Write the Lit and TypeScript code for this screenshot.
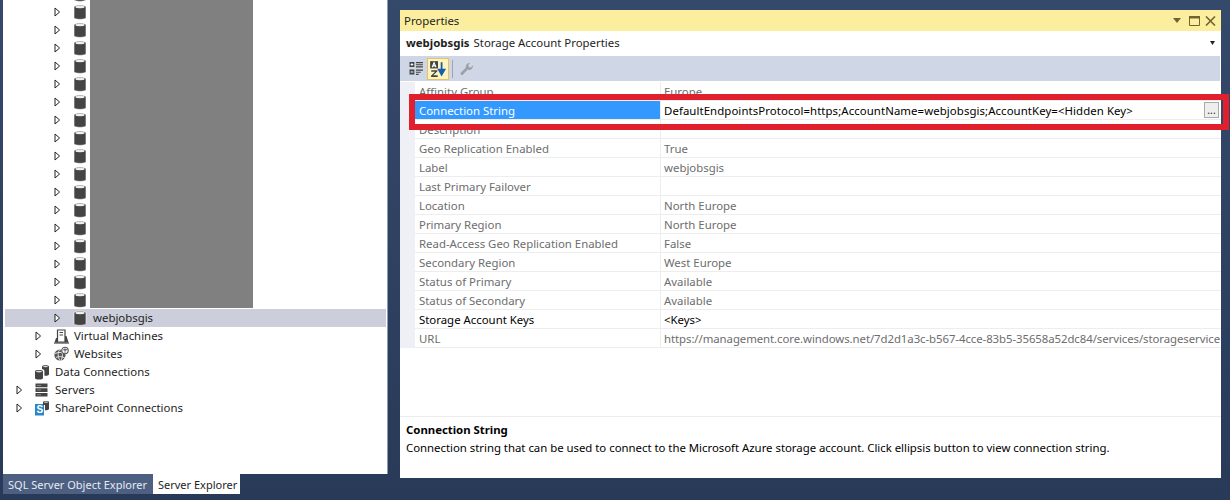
import {LitElement, css, html, svg} from "lit";
import {customElement} from "lit/decorators.js";
import {classMap} from "lit/directives/class-map.js";

const cylinder = svg`
    <path d="M2 4C2 1.6 14 1.6 14 4V14.5C14 17 2 17 2 14.5Z" fill="#444" stroke="#fff" stroke-width=".6"/>
    <ellipse cx="8" cy="4" rx="4.6" ry="1.2" fill="#eee"/>`;

const icons: Record<string, unknown> = {
    storage: cylinder,
    vm: svg`
        <path d="M4.5 3H12V15H4.5Z" fill="#fff" stroke="#444" stroke-width="1.2"/>
        <path d="M6.5 5.5H10M6.5 8H10" stroke="#444" stroke-width="1.2"/>
        <path d="M1.5 15.5L3 11H4.5V15.5ZM12 9H13.5L15.5 15.5H12Z" fill="#444"/>
        <path d="M1 16H16" stroke="#444" stroke-width="1.2"/>`,
    web: svg`
        <circle cx="7" cy="10" r="5.6" fill="#555"/>
        <path d="M2 8.5C5 7 9 7 12.5 9M3 12.5C6 11 9 11.5 12 13M7 4.5C4.5 7 4.5 12 7 15.5M7.5 4.5C10 7 10 12 8 15.5" fill="none" stroke="#eee" stroke-width=".9"/>
        <circle cx="12" cy="5.5" r="3.2" fill="#fff" stroke="#555" stroke-width="1.1"/>
        <path d="M10 4.6C11.5 5.4 13 5.4 14.4 4.6M12 2.6V8.2" stroke="#555" stroke-width=".7"/>`,
    data: svg`
        <path d="M1 8.5C1 6.6 9 6.6 9 8.5V15C9 17 1 17 1 15Z" fill="#444"/>
        <ellipse cx="5" cy="8.6" rx="3.2" ry=".8" fill="#ddd"/>
        <path d="M8 3.5C8 1.8 15 1.8 15 3.5V11.5C15 12.6 12 13 10.4 12.8V7.5C10 6.6 9 6.2 8 6Z" fill="#444"/>
        <ellipse cx="11.5" cy="3.6" rx="2.7" ry=".7" fill="#ddd"/>`,
    servers: svg`
        <path d="M1.5 2.5H13.5V6.2H1.5ZM1.5 7.2H13.5V10.9H1.5ZM1.5 11.9H13.5V15.6H1.5Z" fill="#444"/>
        <path d="M3 4.4H7M3 9H7M3 13.8H7" stroke="#aaa" stroke-width=".7"/>`,
    sharepoint: svg`
        <path d="M1 5H10V16.5H1Z" fill="#2a86c4"/>
        <text x="2.6" y="14.4" class="sp">S</text>
        <path d="M9 3C9 1.6 15 1.6 15 3V10C15 11 12.5 11.4 11 11.2V6H9Z" fill="#444"/>
        <ellipse cx="12" cy="3.1" rx="2.4" ry=".6" fill="#ddd"/>`,
};

const arrowIcon = html`<svg class="arrow" width="7" height="10" viewBox="0 0 7 10"><path d="M1 1L5.6 5L1 9Z" fill="#fff" stroke="#222" stroke-width="1"/></svg>`;

interface TreeRow {
    level: number;
    icon: string;
    text?: string;
    arrow?: boolean;
    selected?: boolean;
}

const treeRows: TreeRow[] = [
    ...Array.from({length: 18}, () => ({level: 2, icon: "storage", arrow: true})),
    {level: 2, icon: "storage", text: "webjobsgis", arrow: true, selected: true},
    {level: 1, icon: "vm", text: "Virtual Machines", arrow: true},
    {level: 1, icon: "web", text: "Websites", arrow: true},
    {level: 0, icon: "data", text: "Data Connections"},
    {level: 0, icon: "servers", text: "Servers", arrow: true},
    {level: 0, icon: "sharepoint", text: "SharePoint Connections", arrow: true},
];

interface PropRow {
    name: string;
    value: string;
    live?: boolean;
    selected?: boolean;
    tight?: boolean;
}

const propRows: PropRow[] = [
    {name: "Affinity Group", value: "Europe"},
    {name: "Connection String", value: "DefaultEndpointsProtocol=https;AccountName=webjobsgis;AccountKey=<Hidden Key>", selected: true},
    {name: "Description", value: ""},
    {name: "Geo Replication Enabled", value: "True"},
    {name: "Label", value: "webjobsgis"},
    {name: "Last Primary Failover", value: ""},
    {name: "Location", value: "North Europe"},
    {name: "Primary Region", value: "North Europe"},
    {name: "Read-Access Geo Replication Enabled", value: "False"},
    {name: "Secondary Region", value: "West Europe"},
    {name: "Status of Primary", value: "Available"},
    {name: "Status of Secondary", value: "Available"},
    {name: "Storage Account Keys", value: "<Keys>", live: true},
    {name: "URL", value: "https://management.core.windows.net/7d2d1a3c-b567-4cce-83b5-35658a52dc84/services/storageservice", tight: true},
];

@customElement("app-root")
class AppRoot extends LitElement {
    static styles = css`
        :host {
            display: flex;
            width: 1230px;
            height: 500px;
            overflow: hidden;
            position: relative;
            background: linear-gradient(#35496b, #293a58);
            font-family: "Noto Sans", sans-serif;
            font-size: 11.4px;
            color: #1e1e1e;
        }
        .left {
            width: 385px;
            margin-left: 3px;
            display: flex;
            flex-direction: column;
        }
        .tree {
            height: 474px;
            background: #fff;
            overflow: hidden;
            border-right: 1px solid #8a9ab5;
        }
        .rows {
            margin-top: -15px;
        }
        .row {
            display: flex;
            align-items: center;
            height: 18px;
            margin-left: 2px;
            width: 381px;
            box-sizing: border-box;
        }
        .row.selected {
            background: #cccedb;
        }
        .arrow-slot {
            width: 19px;
            flex: none;
            display: flex;
        }
        .arrow {
            margin-left: 1px;
        }
        .row svg.icon {
            flex: none;
            width: 18px;
            height: 18px;
        }
        .sp {
            font: bold 10px "Liberation Sans", sans-serif;
            fill: #fff;
        }
        .label {
            padding: 0 0 2px 3px;
            white-space: nowrap;
        }
        .redacted {
            width: 163px;
            height: 18px;
            background: #808080;
        }
        .row:nth-child(18) .redacted {
            height: 17px;
            align-self: flex-start;
        }
        .tabs {
            display: flex;
            height: 20px;
            font-size: 11px;
        }
        .tab {
            display: flex;
            align-items: center;
            padding: 0 5px;
            background: #4d6082;
            color: #e6ebf2;
            width: 150px;
            flex: none;
            box-sizing: border-box;
            white-space: nowrap;
        }
        .tab.active {
            background: #fff;
            color: #1e1e1e;
            width: 87px;
        }
        .props {
            width: 821px;
            height: 468px;
            margin: 10px 0 0 12px;
            background: #fff;
            display: flex;
            flex-direction: column;
        }
        .title {
            height: 21px;
            flex: none;
            background: #fbef9f;
            display: flex;
            align-items: center;
            padding: 0 5px 0 4px;
        }
        .title span {
            flex: 1;
        }
        .ctl-max {
            margin: 0 5px 0 8px;
        }
        .combo {
            height: 25px;
            flex: none;
            display: flex;
            align-items: center;
            padding: 0 6px 2px;
            box-sizing: border-box;
            gap: 4px;
        }
        .combo b {
            font-weight: 700;
        }
        .combo span {
            flex: 1;
        }
        .toolbar {
            height: 25px;
            flex: none;
            background: #cfd6e5;
            display: flex;
            align-items: center;
            padding-left: 5px;
            margin-right: 1px;
        }
        .tool {
            width: 22px;
            height: 22px;
            box-sizing: border-box;
            display: flex;
            align-items: center;
            justify-content: center;
        }
        .tool.on {
            background: #fdf4bf;
            border: 1px solid #e5c365;
        }
        .sep {
            width: 1px;
            height: 18px;
            background: #9aa5bc;
            margin: 0 3px;
        }
        .grid {
            flex: 1;
            padding-top: 1px;
            min-height: 0;
        }
        .prop {
            display: grid;
            grid-template-columns: 15px 245px 1fr;
            height: 19px;
            box-sizing: border-box;
            color: #6d6d6d;
        }
        .prop .gutter {
            background: #eef0f5;
        }
        .prop .name,
        .prop .value {
            border-bottom: 1px solid #ededed;
            white-space: nowrap;
            overflow: hidden;
            line-height: 20px;
        }
        .prop .name {
            padding-left: 4px;
        }
        .prop .value {
            border-left: 1px solid #ededed;
            padding-left: 3px;
            position: relative;
        }
        .prop.tight .value {
            letter-spacing: -.07px;
        }
        .prop.live {
            color: #000;
        }
        .prop.selected .name {
            background: #3399ff;
            color: #fff;
        }
        .prop.selected .value {
            color: #000;
            letter-spacing: .08px;
        }
        .dots {
            position: absolute;
            right: 2px;
            top: 1px;
            width: 15px;
            height: 16px;
            box-sizing: border-box;
            border: 1px solid #aaa;
            background: #eee;
            color: #222;
            font-size: 10px;
            line-height: 14px;
            text-align: center;
        }
        .desc {
            height: 62px;
            flex: none;
            border-top: 1px solid #ededed;
            padding: 4px 6px;
            box-sizing: border-box;
            color: #000;
            line-height: 18px;
            letter-spacing: -.02px;
        }
        .desc b {
            display: block;
        }
        .callout {
            position: absolute;
            left: 409px;
            top: 94px;
            width: 820px;
            height: 36px;
            box-sizing: border-box;
            border: 6px solid #e0202c;
        }
    `;

    private renderTreeRow(row: TreeRow) {
        return html`
            <div class="row ${classMap({selected: !!row.selected})}" style="padding-left:${10 + row.level * 19}px">
                <div class="arrow-slot">${row.arrow ? arrowIcon : ""}</div>
                <svg class="icon" viewBox="0 0 18 18">${icons[row.icon]}</svg>
                ${row.text ? html`<div class="label">${row.text}</div>` : html`<div class="redacted"></div>`}
            </div>
        `;
    }

    private renderProp(row: PropRow) {
        return html`
            <div class="prop ${classMap({live: !!row.live, selected: !!row.selected, tight: !!row.tight})}">
                <div class="gutter"></div>
                <div class="name">${row.name}</div>
                <div class="value">${row.value}${row.selected ? html`<div class="dots">...</div>` : ""}</div>
            </div>
        `;
    }

    protected render(): unknown {
        return html`
            <div class="left">
                <div class="tree">
                    <div class="rows">${treeRows.map(r => this.renderTreeRow(r))}</div>
                </div>
                <div class="tabs">
                    <div class="tab">SQL Server Object Explorer</div>
                    <div class="tab active">Server Explorer</div>
                </div>
            </div>
            <div class="props">
                <div class="title">
                    <span>Properties</span>
                    <svg width="8" height="5" viewBox="0 0 8 5"><path d="M0 0H8L4 5Z" fill="#716231"/></svg>
                    <svg class="ctl-max" width="11" height="10" viewBox="0 0 11 10"><path d="M.5 .5H10.5V9.5H.5Z" fill="none" stroke="#716231" stroke-width="1"/><path d="M0 0H11V2.5H0Z" fill="#716231"/></svg>
                    <svg width="11" height="10" viewBox="0 0 11 10"><path d="M1 .5L10 9.5M10 .5L1 9.5" fill="none" stroke="#716231" stroke-width="1.6"/></svg>
                </div>
                <div class="combo">
                    <b>webjobsgis</b>
                    <span>Storage Account Properties</span>
                    <svg width="5" height="4" viewBox="0 0 5 4"><path d="M0 0H5L2.5 4Z" fill="#222"/></svg>
                </div>
                <div class="toolbar">
                    <div class="tool">
                        <svg width="15" height="15" viewBox="0 0 14 14">
                            <path d="M.5 1H5V5.5H.5ZM.5 8H5V12.5H.5Z" fill="#444"/>
                            <path d="M1.5 3.2H4M2.7 2V4.5M1.5 10.2H4" stroke="#fff" stroke-width="1"/>
                            <path d="M6.5 1.5H13M6.5 3.5H13M6.5 5.5H13M6.5 8.5H13M6.5 10.5H11M6.5 12.5H9" stroke="#444" stroke-width="1"/>
                        </svg>
                    </div>
                    <div class="tool on">
                        <svg width="18" height="18" viewBox="0 0 16 16">
                            <path d="M1 1H8V7.5H1Z" fill="#444"/>
                            <path d="M2.8 6.5L4.5 2.4L6.2 6.5M3.4 5.2H5.6" fill="none" stroke="#fff" stroke-width="1"/>
                            <path d="M2 9H7.5V10L3.8 13.5H7.7V15H1.8V14L5.5 10.5H2Z" fill="#444"/>
                            <path d="M11.2 2V11M8.7 8.5L11.2 13L13.8 8.5Z" fill="#1b5ea8" stroke="#1b5ea8" stroke-width="1.6"/>
                        </svg>
                    </div>
                    <div class="sep"></div>
                    <div class="tool">
                        <svg width="14" height="14" viewBox="0 0 14 14"><path d="M13 3.2A4 4 0 0 1 7.6 7.6L3 12.4A1.4 1.4 0 0 1 1 10.4L5.8 5.8A4 4 0 0 1 10.2 1L8.2 3L9 5.2L11 5.6Z" fill="#9a9fa8"/></svg>
                    </div>
                </div>
                <div class="grid">${propRows.map(r => this.renderProp(r))}</div>
                <div class="desc">
                    <b>Connection String</b>
                    Connection string that can be used to connect to the Microsoft Azure storage account. Click ellipsis button to view connection string.
                </div>
            </div>
            <div class="callout"></div>
        `;
    }
}
